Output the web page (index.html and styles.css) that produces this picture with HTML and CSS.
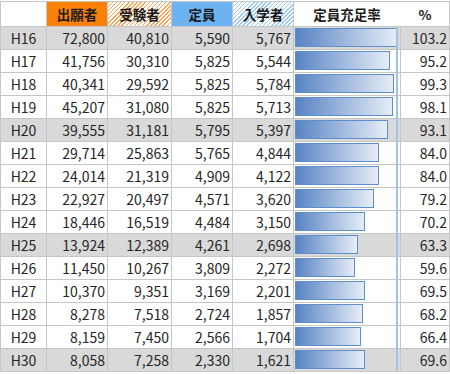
FILE: index.html
```html
<!DOCTYPE html>
<html lang="ja">
<head>
<meta charset="utf-8">
<link rel="stylesheet" href="styles.css">
</head>
<body>
<div class="table">
  <div class="row head">
    <div class="c blank"></div>
    <div class="c h-orange">出願者</div>
    <div class="c h-orange-stripe">受験者</div>
    <div class="c h-blue">定員</div>
    <div class="c h-blue-stripe">入学者</div>
    <div class="c h-white h-rate">定員充足率</div>
    <div class="c h-white">%</div>
  </div>
  <div class="row alt"><div class="c y">H16</div><div class="c n">72,800</div><div class="c n">40,810</div><div class="c n">5,590</div><div class="c n">5,767</div><div class="c b"><span class="bar" style="width:103.2px"></span></div><div class="c n">103.2</div></div>
  <div class="row"><div class="c y">H17</div><div class="c n">41,756</div><div class="c n">30,310</div><div class="c n">5,825</div><div class="c n">5,544</div><div class="c b"><span class="bar" style="width:95.2px"></span></div><div class="c n">95.2</div></div>
  <div class="row"><div class="c y">H18</div><div class="c n">40,341</div><div class="c n">29,592</div><div class="c n">5,825</div><div class="c n">5,784</div><div class="c b"><span class="bar" style="width:99.3px"></span></div><div class="c n">99.3</div></div>
  <div class="row"><div class="c y">H19</div><div class="c n">45,207</div><div class="c n">31,080</div><div class="c n">5,825</div><div class="c n">5,713</div><div class="c b"><span class="bar" style="width:98.1px"></span></div><div class="c n">98.1</div></div>
  <div class="row alt"><div class="c y">H20</div><div class="c n">39,555</div><div class="c n">31,181</div><div class="c n">5,795</div><div class="c n">5,397</div><div class="c b"><span class="bar" style="width:93.1px"></span></div><div class="c n">93.1</div></div>
  <div class="row"><div class="c y">H21</div><div class="c n">29,714</div><div class="c n">25,863</div><div class="c n">5,765</div><div class="c n">4,844</div><div class="c b"><span class="bar" style="width:84px"></span></div><div class="c n">84.0</div></div>
  <div class="row"><div class="c y">H22</div><div class="c n">24,014</div><div class="c n">21,319</div><div class="c n">4,909</div><div class="c n">4,122</div><div class="c b"><span class="bar" style="width:84px"></span></div><div class="c n">84.0</div></div>
  <div class="row"><div class="c y">H23</div><div class="c n">22,927</div><div class="c n">20,497</div><div class="c n">4,571</div><div class="c n">3,620</div><div class="c b"><span class="bar" style="width:79.2px"></span></div><div class="c n">79.2</div></div>
  <div class="row"><div class="c y">H24</div><div class="c n">18,446</div><div class="c n">16,519</div><div class="c n">4,484</div><div class="c n">3,150</div><div class="c b"><span class="bar" style="width:70.2px"></span></div><div class="c n">70.2</div></div>
  <div class="row alt"><div class="c y">H25</div><div class="c n">13,924</div><div class="c n">12,389</div><div class="c n">4,261</div><div class="c n">2,698</div><div class="c b"><span class="bar" style="width:63.3px"></span></div><div class="c n">63.3</div></div>
  <div class="row"><div class="c y">H26</div><div class="c n">11,450</div><div class="c n">10,267</div><div class="c n">3,809</div><div class="c n">2,272</div><div class="c b"><span class="bar" style="width:59.6px"></span></div><div class="c n">59.6</div></div>
  <div class="row"><div class="c y">H27</div><div class="c n">10,370</div><div class="c n">9,351</div><div class="c n">3,169</div><div class="c n">2,201</div><div class="c b"><span class="bar" style="width:69.5px"></span></div><div class="c n">69.5</div></div>
  <div class="row"><div class="c y">H28</div><div class="c n">8,278</div><div class="c n">7,518</div><div class="c n">2,724</div><div class="c n">1,857</div><div class="c b"><span class="bar" style="width:68.2px"></span></div><div class="c n">68.2</div></div>
  <div class="row"><div class="c y">H29</div><div class="c n">8,159</div><div class="c n">7,450</div><div class="c n">2,566</div><div class="c n">1,704</div><div class="c b"><span class="bar" style="width:66.4px"></span></div><div class="c n">66.4</div></div>
  <div class="row alt"><div class="c y">H30</div><div class="c n">8,058</div><div class="c n">7,258</div><div class="c n">2,330</div><div class="c n">1,621</div><div class="c b"><span class="bar" style="width:69.6px"></span></div><div class="c n">69.6</div></div>
  <div class="axis"></div>
</div>
</body>
</html>
```
FILE: styles.css
```css
html, body {
  margin: 0;
  padding: 0;
  background: #fff;
}
body {
  font-family: "Noto Sans CJK JP", "Noto Sans", sans-serif;
  color: #262626;
}
.table {
  position: relative;
  margin-top: 1px;
  width: 450px;
  box-sizing: border-box;
  display: grid;
  grid-template-columns: 45px 60px 63px 60px 60px 106px 48px;
  grid-template-rows: 24px;
  grid-auto-rows: 22px;
  gap: 1px;
  padding: 1px;
  background: #c6c6c6;
}
.row {
  display: contents;
}
.c {
  background: #fff;
  font-size: 14px;
  line-height: 22px;
  overflow: hidden;
  white-space: nowrap;
}
.row.alt .c {
  background: #d9d9d9;
}
.head .c {
  font-weight: bold;
  font-size: 13.5px;
  line-height: 24px;
  text-align: center;
  color: #1a1a1a;
}
.h-orange {
  background: #fb8008 !important;
}
.h-orange-stripe {
  background: repeating-linear-gradient(135deg, #f9a55a 0 1.1px, #fff 1.1px 2.9px) !important;
}
.h-blue {
  background: #6eb3f1 !important;
}
.h-blue-stripe {
  background: repeating-linear-gradient(135deg, #9bc9f1 0 1.1px, #fff 1.1px 2.9px) !important;
}
.h-rate {
  box-shadow: 1px 0 0 #fff;
}
.y {
  text-align: center;
}
.n {
  text-align: right;
  padding-right: 2px;
}
.b {
  display: flex;
  align-items: flex-start;
  padding: 1px 0 0 1px;
}
.bar {
  display: block;
  height: 19px;
  box-sizing: border-box;
  border: 1px solid #5f8ecd;
  background: linear-gradient(to right, #5884c4, #e6edf7);
}
.axis {
  position: absolute;
  left: 396px;
  top: 26px;
  bottom: 1px;
  width: 2px;
  background: #9fc4e8;
}
```
